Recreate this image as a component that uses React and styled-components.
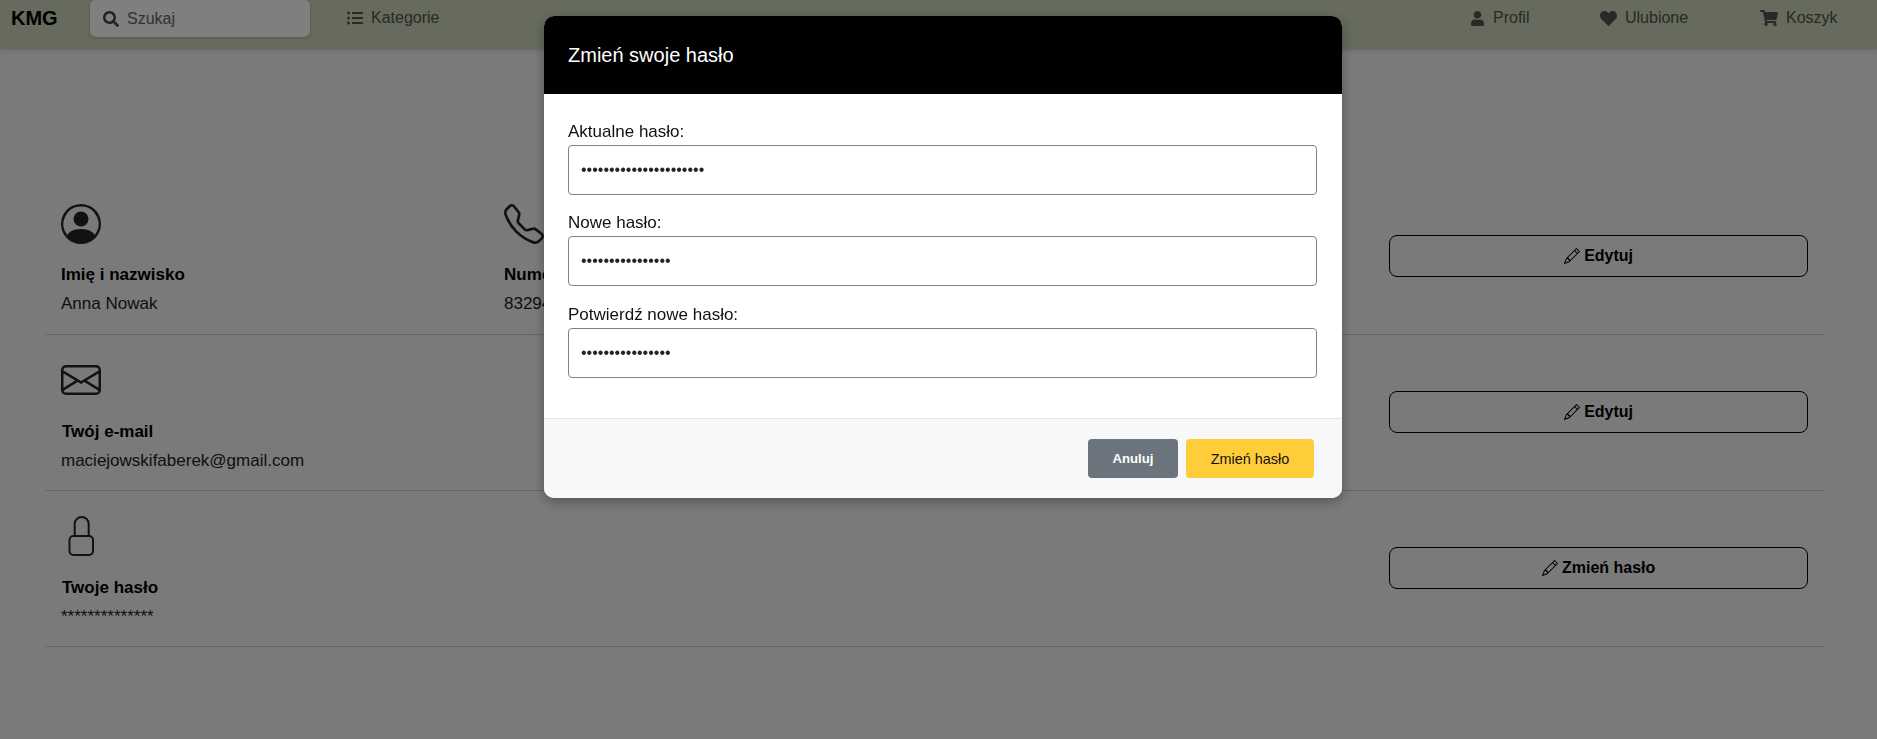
import React from "react";
import styled, { createGlobalStyle } from "styled-components";
import { FaSearch, FaListUl, FaUser, FaHeart, FaShoppingCart } from "react-icons/fa";
import { BsPersonCircle, BsTelephone, BsEnvelope, BsPencil } from "react-icons/bs";

const Global = createGlobalStyle`
  html, body { margin: 0; padding: 0; height: 100%; overflow: hidden; background: #f4f4f4; }
  body { font-family: "Liberation Sans", Arial, sans-serif; font-size: 17px; color: #111; }
  * { box-sizing: border-box; }
`;

const Page = styled.div`
  height: 739px;
  overflow: hidden;
  background: #f4f4f4;
`;

const Navbar = styled.header`
  height: 49px;
  background: #ccd6bc;
  box-shadow: 0 2px 4px rgba(0, 0, 0, 0.12);
  display: flex;
  align-items: flex-start;
  padding-left: 11px;
`;

const Logo = styled.div`
  font-size: 20px;
  font-weight: 700;
  line-height: 36px;
  width: 79px;
  color: #000;
`;

const Search = styled.div`
  width: 220px;
  height: 37px;
  background: #fff;
  border-radius: 6px;
  box-shadow: 0 1px 3px rgba(0, 0, 0, 0.2);
  display: flex;
  align-items: center;
  padding-left: 13px;
  gap: 8px;
  color: #646464;
  font-size: 16px;
  svg { color: #444; flex: none; }
`;

const NavLink = styled.div`
  display: flex;
  align-items: center;
  gap: 8px;
  height: 36px;
  font-size: 16px;
  color: #50554a;
  svg { flex: none; color: #50554a; }
`;

const NavLeft = styled.div`
  margin-left: 37px;
  flex: 1;
`;

const NavRight = styled.nav`
  display: grid;
  grid-template-columns: 130px 160px 90px;
  width: 380px;
  margin-right: 27px;
`;

const Main = styled.main`
  margin: 0 53px 0 45px;
  padding-top: 130px;
`;

const Row = styled.section`
  display: grid;
  grid-template-columns: 443px 1fr 25%;
  align-items: center;
  height: 156px;
  border-bottom: 1px solid #ccc;
  padding-top: 1px;
`;

const Cell = styled.div`
  padding-left: 16px;
  align-self: start;
  padding-top: 24px;
`;

const IconBox = styled.div`
  height: 40px;
  margin-bottom: ${(p) => p.$gap || 19}px;
  display: flex;
  align-items: center;
  color: #212529;
`;

const Label = styled.div`
  font-weight: 700;
  line-height: 24px;
  margin-bottom: 5px;
  margin-left: ${(p) => p.$shift || 0}px;
  color: #000;
`;

const Value = styled.div`
  line-height: 24px;
  color: #222;
  white-space: nowrap;
`;

const ActionCell = styled.div`
  grid-column: 3;
  padding: 0 16px 2px 10px;
`;

const OutlineButton = styled.button`
  width: 100%;
  height: 42px;
  background: transparent;
  border: 1px solid #000;
  border-radius: 8px;
  font: 700 16px "Liberation Sans", Arial, sans-serif;
  color: #000;
  display: flex;
  align-items: center;
  justify-content: center;
  gap: 4px;
`;

const Backdrop = styled.div`
  position: fixed;
  inset: 0;
  background: rgba(0, 0, 0, 0.5);
`;

const ModalLayer = styled.div`
  position: fixed;
  inset: 0;
  display: flex;
  justify-content: center;
  align-items: flex-start;
  padding: 16px 0 0 9px;
`;

const Modal = styled.div`
  width: 798px;
  height: 482px;
  background: #fff;
  border-radius: 10px;
  overflow: hidden;
  box-shadow: 0 4px 12px rgba(0, 0, 0, 0.3);
  display: flex;
  flex-direction: column;
`;

const ModalHeader = styled.div`
  height: 78px;
  background: #000;
  color: #fff;
  padding: 0 24px;
  display: flex;
  align-items: center;
  font-size: 20px;
`;

const ModalBody = styled.form`
  flex: 1;
  padding: 26px 25px 0 24px;
`;

const Field = styled.div`
  margin-bottom: 16.25px;
`;

const FieldLabel = styled.label`
  display: block;
  line-height: 24px;
  height: 25px;
  color: #111;
`;

const Input = styled.input`
  display: block;
  width: 100%;
  height: 50px;
  border: 1px solid #808080;
  border-radius: 4px;
  padding: 0 12px;
  font: 16px "Liberation Sans", Arial, sans-serif;
  color: #212529;
  background: #fff;
  outline: none;
`;

const ModalFooter = styled.div`
  height: 80px;
  background: #f7f8fa;
  border-top: 1px solid #e2e5ea;
  display: flex;
  justify-content: flex-end;
  gap: 8px;
  padding: 20px 28px 0 0;
`;

const FooterButton = styled.button`
  width: ${(p) => p.$w}px;
  height: 39px;
  border: none;
  border-radius: 4px;
  background: ${(p) => p.$bg};
  color: ${(p) => p.$fg};
  font: ${(p) => p.$weight} ${(p) => p.$size}px "Liberation Sans", Arial, sans-serif;
`;

const LockIcon = () => (
  <svg width="40" height="40" viewBox="0 0 40 40" fill="none" stroke="currentColor" strokeWidth="2">
    <rect x="8.5" y="20" width="23.5" height="19" rx="4" />
    <path d="M13.7 20V8a7 7 0 0 1 14 0v12" />
  </svg>
);

const rows = [
  { icon: <BsPersonCircle size={40} />, label: "Imię i nazwisko", value: "Anna Nowak", action: "Edytuj",
    extra: { icon: <BsTelephone size={40} />, label: "Numer telefonu", value: "832945117" } },
  { icon: <BsEnvelope size={40} />, label: "Twój e-mail", value: "maciejowskifaberek@gmail.com", action: "Edytuj", shift: 1, gap: 20 },
  { icon: <LockIcon />, label: "Twoje hasło", value: "**************", action: "Zmień hasło", shift: 1, gap: 20 },
];

const fields = [
  { label: "Aktualne hasło:", value: "abcdefghijklmnopqrstuv" },
  { label: "Nowe hasło:", value: "abcdefghijklmnop" },
  { label: "Potwierdź nowe hasło:", value: "abcdefghijklmnop" },
];

export default function App() {
  return (
    <Page>
      <Global />
      <Navbar>
        <Logo>KMG</Logo>
        <Search><FaSearch size={16} /> Szukaj</Search>
        <NavLeft><NavLink><FaListUl size={16} /> Kategorie</NavLink></NavLeft>
        <NavRight>
          <NavLink><FaUser size={15} /> Profil</NavLink>
          <NavLink><FaHeart size={17} /> Ulubione</NavLink>
          <NavLink><FaShoppingCart size={18} /> Koszyk</NavLink>
        </NavRight>
      </Navbar>
      <Main>
        {rows.map((r, i) => (
          <Row key={i}>
            <Cell>
              <IconBox $gap={r.gap}>{r.icon}</IconBox>
              <Label $shift={r.shift}>{r.label}</Label>
              <Value>{r.value}</Value>
            </Cell>
            {r.extra ? (
              <Cell>
                <IconBox>{r.extra.icon}</IconBox>
                <Label>{r.extra.label}</Label>
                <Value>{r.extra.value}</Value>
              </Cell>
            ) : null}
            <ActionCell>
              <OutlineButton type="button"><BsPencil size={16} /> {r.action}</OutlineButton>
            </ActionCell>
          </Row>
        ))}
      </Main>
      <Backdrop />
      <ModalLayer>
        <Modal>
          <ModalHeader>Zmień swoje hasło</ModalHeader>
          <ModalBody>
            {fields.map((f) => (
              <Field key={f.label}>
                <FieldLabel>{f.label}</FieldLabel>
                <Input type="password" defaultValue={f.value} readOnly />
              </Field>
            ))}
          </ModalBody>
          <ModalFooter>
            <FooterButton type="button" $w={90} $bg="#6c757d" $fg="#fff" $weight={700} $size={13.2}>Anuluj</FooterButton>
            <FooterButton type="button" $w={128} $bg="#ffcd39" $fg="#111" $weight={400} $size={14.4}>Zmień hasło</FooterButton>
          </ModalFooter>
        </Modal>
      </ModalLayer>
    </Page>
  );
}
